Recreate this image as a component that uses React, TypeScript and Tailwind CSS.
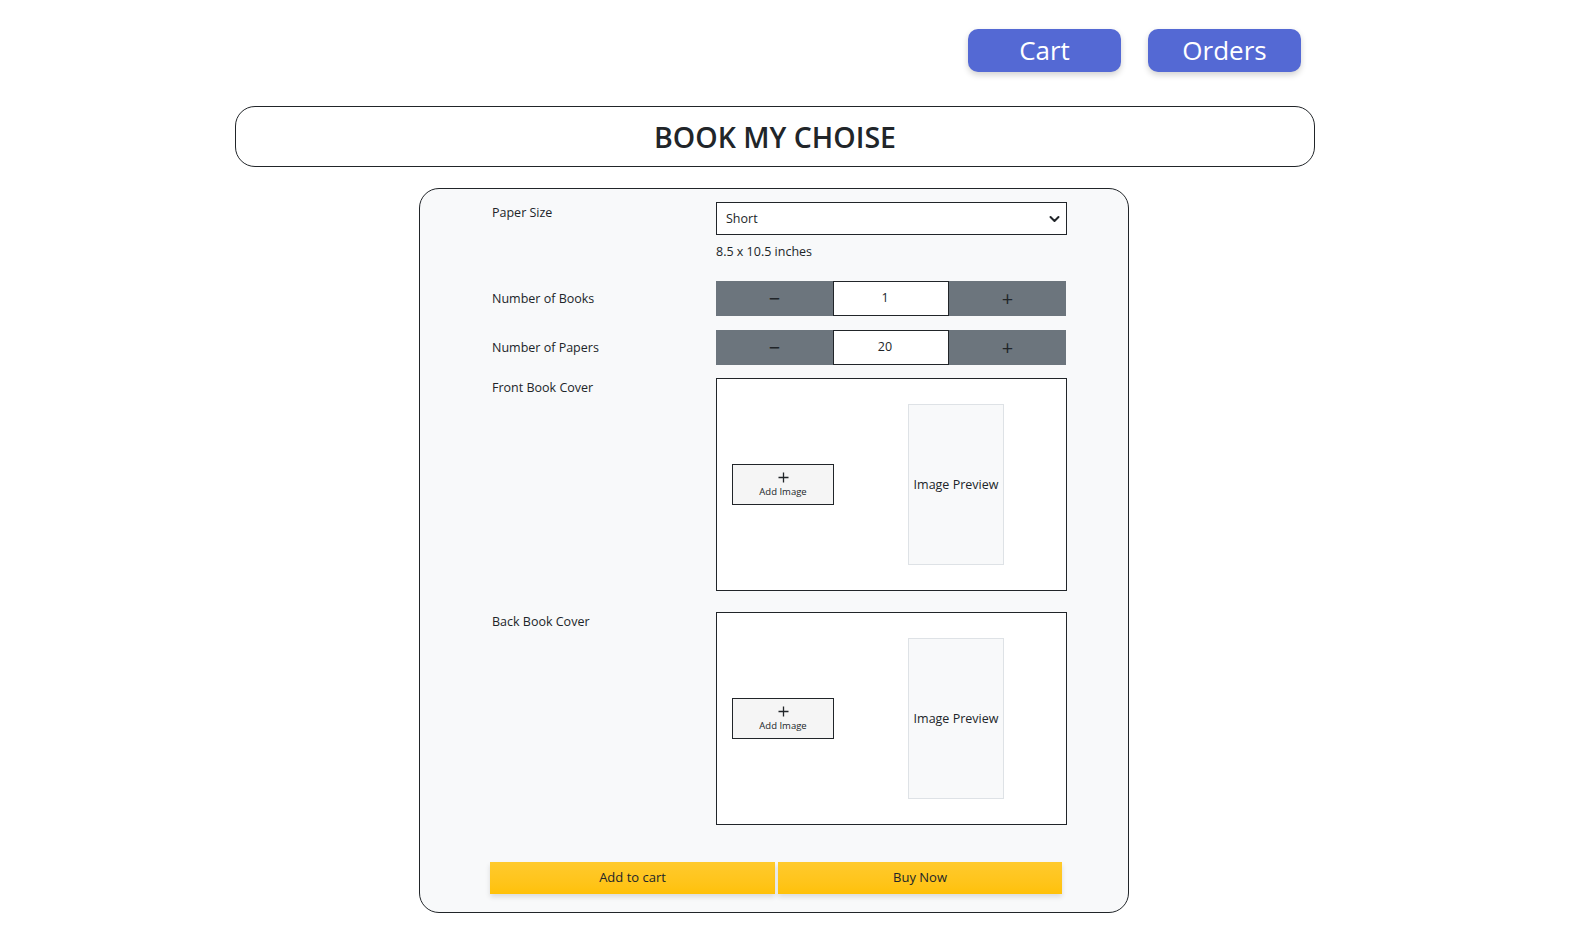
import React from "react";

function Stepper({ value }: { value: string }) {
  return (
    <div className="flex h-[35px] w-[350px] bg-[#6c757d]">
      <div className="flex w-[117px] items-center justify-center text-[20px] leading-none text-[#212529]">−</div>
      <div className="flex w-[116px] items-center justify-center border border-[#212529] bg-white pr-[12px] text-[12.5px] text-[#212529]">{value}</div>
      <div className="flex w-[117px] items-center justify-center text-[20px] leading-none text-[#212529]">+</div>
    </div>
  );
}

function CoverBox() {
  return (
    <div className="flex h-[213px] w-[351px] items-center border border-[#212529] bg-white pl-[15px]">
      <div className="flex h-[41px] w-[102px] flex-col items-center justify-center border border-[#212529] bg-[#f5f5f5] text-[#212529]">
        <svg width="11" height="11" viewBox="0 0 11 11" fill="none">
          <path d="M5.5 0.5 V10.5 M0.5 5.5 H10.5" stroke="#212529" strokeWidth="1.3" />
        </svg>
        <span className="mt-[2px] text-[9.5px] leading-[13px]">Add Image</span>
      </div>
      <div className="ml-[74px] flex h-[161px] w-[96px] items-center justify-center border border-[#dee2e6] bg-[#f8f9fa] pt-[2px] text-[12.5px] text-[#212529]">
        Image Preview
      </div>
    </div>
  );
}

export default function App() {
  return (
    <div className="min-h-screen bg-white font-['Open_Sans',sans-serif] text-[#212529]">
      <div className="flex justify-end gap-[27px] pt-[29px] pr-[287px]">
        <button className="flex h-[43px] w-[153px] items-center justify-center rounded-[10px] bg-[#5469d4] font-['Open_Sans',sans-serif] text-[26px] text-white shadow-[0_3px_6px_rgba(0,0,0,0.18)]">
          Cart
        </button>
        <button className="flex h-[43px] w-[153px] items-center justify-center rounded-[10px] bg-[#5469d4] font-['Open_Sans',sans-serif] text-[26px] text-white shadow-[0_3px_6px_rgba(0,0,0,0.18)]">
          Orders
        </button>
      </div>

      <div className="ml-[235px] mt-[34px] flex h-[61px] w-[1080px] items-center justify-center rounded-[20px] border border-[#212529]">
        <h1 className="pt-[2px] text-[28.5px] font-semibold text-[#212529]">BOOK MY CHOISE</h1>
      </div>

      <div className="ml-[419px] mt-[21px] w-[710px] rounded-[20px] border border-[#212529] bg-[#f8f9fa] pb-[18px] pl-[72px] pt-[13px]">
        <div className="grid grid-cols-[224px_351px]">
          <div className="pt-[1px] text-[12.5px] leading-5">Paper Size</div>
          <div>
            <div className="flex h-[33px] w-[351px] items-center justify-between border border-[#212529] bg-white pl-[9px] pr-[6px] text-[12.5px]">
              <span className="pt-[2px]">Short</span>
              <svg width="11" height="8" viewBox="0 0 11 8" fill="none">
                <path d="M1.5 2 L5.5 6 L9.5 2" stroke="#212529" strokeWidth="2" strokeLinecap="round" strokeLinejoin="round" />
              </svg>
            </div>
            <div className="mt-[7px] text-[12.5px] leading-5">8.5 x 10.5 inches</div>
          </div>

          <div className="mt-[19px] flex items-center pt-[1px] text-[12.5px] leading-5">Number of Books</div>
          <div className="mt-[19px]"><Stepper value="1" /></div>

          <div className="mt-[14px] flex items-center text-[12.5px] leading-5">Number of Papers</div>
          <div className="mt-[14px]"><Stepper value="20" /></div>

          <div className="mt-[13px] text-[12.5px] leading-5">Front Book Cover</div>
          <div className="mt-[13px]"><CoverBox /></div>

          <div className="mt-[21px] text-[12.5px] leading-5">Back Book Cover</div>
          <div className="mt-[21px]"><CoverBox /></div>
        </div>

        <div className="-ml-[2px] mt-[37px] flex gap-[3px]">
          <button className="h-[32px] w-[285px] bg-gradient-to-b from-[#ffca2c] to-[#ffc107] text-[13px] text-[#212529] shadow-[0_3px_5px_rgba(0,0,0,0.12)]">
            Add to cart
          </button>
          <button className="h-[32px] w-[284px] bg-gradient-to-b from-[#ffca2c] to-[#ffc107] text-[13px] text-[#212529] shadow-[0_3px_5px_rgba(0,0,0,0.12)]">
            Buy Now
          </button>
        </div>
      </div>
    </div>
  );
}
